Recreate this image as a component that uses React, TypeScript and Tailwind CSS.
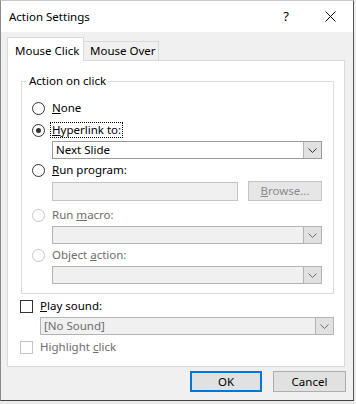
import React from "react";

const font = { fontFamily: '"Segoe UI", "Noto Sans", sans-serif' };

const Chevron: React.FC<{ dim?: boolean }> = ({ dim }) => (
  <svg width="9" height="5" viewBox="0 0 9 5" fill="none">
    <polyline points="0.5,0.5 4.5,4.5 8.5,0.5" stroke={dim ? "#6d6d6d" : "#333"} strokeWidth="1" />
  </svg>
);

const Radio: React.FC<{ checked?: boolean; disabled?: boolean }> = ({ checked, disabled }) => (
  <span
    className={`flex h-[13px] w-[13px] shrink-0 items-center justify-center rounded-full border bg-white ${
      disabled ? "border-[#c4c4c4]" : "border-[#333]"
    }`}
  >
    {checked && <span className="h-[5px] w-[5px] rounded-full bg-[#333]" />}
  </span>
);

const Label: React.FC<{ children: React.ReactNode; focus?: boolean; disabled?: boolean }> = ({ children, focus, disabled }) => (
  <span
    className={`ml-[5px] whitespace-nowrap border px-[1px] leading-[14px] ${focus ? "border-dotted border-black" : "border-transparent"} ${
      disabled ? "text-[#6d6d6d]" : "text-black"
    }`}
  >
    {children}
  </span>
);

const Select: React.FC<{ value?: string; disabled?: boolean; className?: string }> = ({ value, disabled, className }) => (
  <div
    className={`flex h-[18px] border ${disabled ? "border-[#b4b4b4] bg-[#f0f0f0]" : "border-[#9a9a9a] bg-white"} ${className ?? ""}`}
  >
    <span className={`flex-1 pl-[3px] leading-[16px] ${disabled ? "text-[#6d6d6d]" : "text-black"}`}>{value}</span>
    <span className="flex w-[18px] items-center justify-center border-l border-[#b4b4b4] bg-[#e1e1e1]">
      <Chevron dim={disabled} />
    </span>
  </div>
);

const RadioRow: React.FC<{ className: string; checked?: boolean; disabled?: boolean; focus?: boolean; children: React.ReactNode }> = ({
  className,
  checked,
  disabled,
  focus,
  children,
}) => (
  <div className={`flex h-[16px] items-center ${className}`}>
    <Radio checked={checked} disabled={disabled} />
    <Label focus={focus} disabled={disabled}>
      {children}
    </Label>
  </div>
);

export default function App() {
  return (
    <div className="h-[404px] w-[356px] bg-[#ececec] text-[11.5px]" style={font}>
      <div className="flex h-[401px] w-[354px] flex-col border-x border-b border-t border-x-[#8a8a8a] border-b-[#444] border-t-[#c8c8c8] border-r-[#555] bg-[#f0f0f0]">
        {/* Title bar */}
        <div className="flex h-[31px] shrink-0 items-center bg-white pl-[8px]">
          <span className="flex-1 text-black">Action Settings</span>
          <span className="mr-[36px] text-[13px] text-black">?</span>
          <svg width="11" height="11" viewBox="0 0 11 11" className="mr-[17px]">
            <path d="M0.5 0.5 L10.5 10.5 M10.5 0.5 L0.5 10.5" stroke="#000" strokeWidth="1" />
          </svg>
        </div>

        {/* Tabs */}
        <div className="ml-[6px] flex items-end pt-[5px]">
          <div className="relative z-10 mb-[-1px] flex h-[24px] w-[77px] items-start whitespace-nowrap border-x border-t border-[#d9d9d9] bg-white pl-[7px] pt-[4px] text-black">
            Mouse Click
          </div>
          <div className="ml-[-1px] flex h-[19px] w-[76px] items-center whitespace-nowrap border-x border-t border-[#d9d9d9] bg-[#f0f0f0] pl-[6px] text-black">
            Mouse Over
          </div>
        </div>

        {/* Panel */}
        <div className="ml-[6px] flex h-[307px] w-[338px] flex-col border border-[#d9d9d9] bg-white">
          <fieldset className="ml-[13px] mr-[10px] mt-[12px] border border-[#dcdcdc] pb-[9px] pl-[10px]">
            <legend className="ml-[-5px] px-[2px] leading-[16px] text-black">Action on click</legend>
            <RadioRow className="mt-[11px]">
              <u>N</u>one
            </RadioRow>
            <RadioRow className="mt-[6px]" checked focus>
              <u>H</u>yperlink to:
            </RadioRow>
            <Select className="ml-[20px] mt-[3px] w-[270px]" value="Next Slide" />
            <RadioRow className="mt-[3px]">
              <u>R</u>un program:
            </RadioRow>
            <div className="ml-[20px] mt-[3px] flex h-[20px] items-center">
              <div className="h-[19px] w-[186px] border border-[#c4c4c4] bg-[#f0f0f0]" />
              <div className="ml-[10px] flex h-[20px] w-[74px] items-center justify-center border border-[#c4c4c4] bg-[#e6e6e6] text-[#8a8a8a]">
                <span>
                  <u>B</u>rowse...
                </span>
              </div>
            </div>
            <RadioRow className="mt-[6px]" disabled>
              Run <u>m</u>acro:
            </RadioRow>
            <Select className="ml-[20px] mt-[3px] w-[270px]" disabled />
            <RadioRow className="mt-[3px]" disabled>
              Object <u>a</u>ction:
            </RadioRow>
            <Select className="ml-[20px] mt-[3px] w-[270px]" disabled />
          </fieldset>

          <div className="ml-[12px] mt-[4px] flex h-[16px] items-center">
            <span className="h-[13px] w-[13px] border border-[#333] bg-white" />
            <Label>
              <u>P</u>lay sound:
            </Label>
          </div>
          <Select className="ml-[32px] mt-[3px] w-[294px]" value="[No Sound]" disabled />
          <div className="ml-[12px] mt-[4px] flex h-[16px] items-center">
            <span className="h-[13px] w-[13px] border border-[#c4c4c4] bg-white" />
            <Label disabled>
              Highlight <u>c</u>lick
            </Label>
          </div>
        </div>

        {/* Buttons */}
        <div className="mr-[7px] mt-[4px] flex justify-end gap-[11px]">
          <button className="flex h-[21px] w-[72px] items-center justify-center border-2 border-[#0078d7] bg-[#e1e1e1] text-black">
            OK
          </button>
          <button className="flex h-[21px] w-[73px] items-center justify-center border border-[#adadad] bg-[#e1e1e1] text-black">
            Cancel
          </button>
        </div>
      </div>
    </div>
  );
}
